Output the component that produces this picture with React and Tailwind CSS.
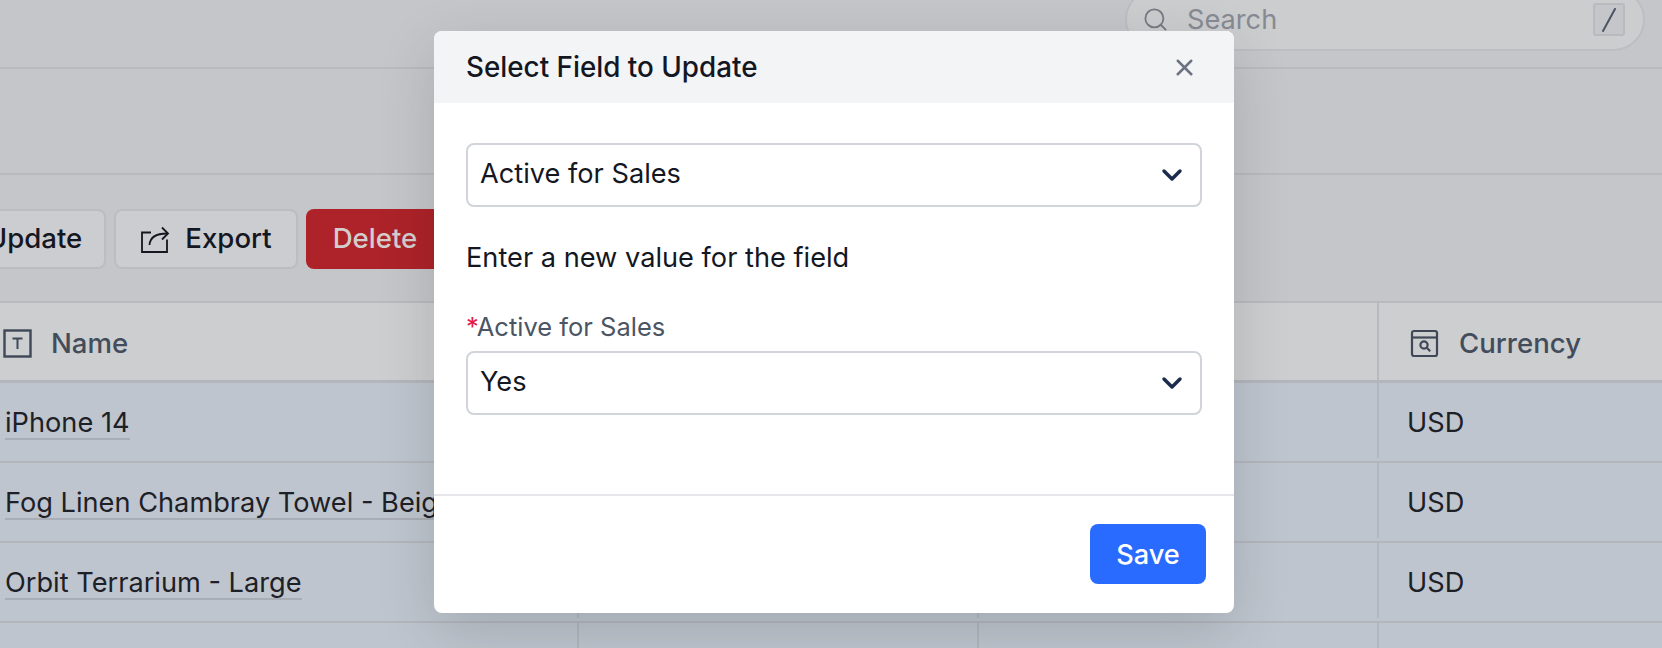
import { ChevronDown, Search, X } from "lucide-react";

const rows = ["iPhone 14", "Fog Linen Chambray Towel - Beige", "Orbit Terrarium - Large"];

const IconText = () => (
  <svg viewBox="0 0 29 29" className="w-[29px] h-[29px] text-[#3f4856]" fill="none" stroke="currentColor">
    <rect x="1.500" y="1.500" width="26" height="26" strokeWidth="2.400" />
    <path d="M9.500 9.500h10M14.500 9.500v10.500" strokeWidth="2" />
  </svg>
);

const IconLookup = () => (
  <svg viewBox="0 0 29 29" className="w-[29px] h-[29px] text-[#3f4856]" fill="none" stroke="currentColor" strokeWidth="2.200">
    <rect x="2" y="2" width="25" height="25" rx="2" />
    <path d="M2 8.500h25" />
    <circle cx="14" cy="16" r="3.600" />
    <path d="M16.800 18.800l3.400 3.400" />
  </svg>
);

const IconExport = () => (
  <svg viewBox="0 0 30 30" className="w-[30px] h-[30px] text-[#14171f]" fill="none" stroke="currentColor" strokeWidth="1.800">
    <path d="M11 8.500H2v19.500h25V15.500" />
    <path d="M9.500 21c.5-7.500 6-11.500 17.500-11.500" />
    <path d="M22 3.500l6 6-6 6" />
  </svg>
);

function FieldSelect({ value }) {
  return (
    <div className="h-[64px] rounded-[8px] border-2 border-[#d1d5db] bg-white flex items-center justify-between pl-[12px] pr-[12px]">
      <span className="text-[27.200px] leading-[38px] -mt-[2px] text-[#14171f]">{value}</span>
      <ChevronDown className="w-[32px] h-[32px] text-[#1a2b4b]" strokeWidth={2.600} />
    </div>
  );
}

export default function App() {
  return (
    <div
      className="relative h-[648px] overflow-hidden bg-[#c5c6ca] text-[27.200px] leading-[38px] text-[#1d2026]"
      style={{ fontFamily: "Inter, 'Liberation Sans', sans-serif" }}
    >
      {/* Top bar, scrolled so the search pill is cut off */}
      <div className="h-[69px] border-b-2 border-[#b9babe] flex justify-end pr-[17px]">
        <div className="-mt-[12px] h-[63px] w-[520px] rounded-full border-2 border-[#bdbec3] bg-[#cccdcf] flex items-center pl-[15px] pr-[18px]">
          <Search className="w-[27px] h-[27px] text-[#777a82]" strokeWidth={1.600} />
          <span className="ml-[18px] text-[#878a92]">Search</span>
          <span className="ml-auto w-[32px] h-[33px] rounded-[3px] border-2 border-[#b9babe] bg-[#c5c6ca] flex items-center justify-center">
            <svg viewBox="0 0 14 24" className="w-[14px] h-[24px] text-[#4b5563]" fill="none" stroke="currentColor" strokeWidth="2" strokeLinecap="round">
              <path d="M13 1L1 23" />
            </svg>
          </span>
        </div>
      </div>

      <div className="h-[106px] border-b-2 border-[#b9babe]" />

      {/* Toolbar */}
      <div className="h-[126px] flex items-start pt-[34px] gap-[8px] -ml-[23px] text-[27.600px]">
        <button className="h-[60px] w-[129px] rounded-[8px] border-2 border-[#bcbdc2] bg-[#cccdd0] font-medium text-[#14171f] pr-[14px] pb-[2px]">
          Update
        </button>
        <button className="h-[60px] w-[184px] rounded-[8px] border-2 border-[#bcbdc2] bg-[#cccdd0] font-medium text-[#14171f] flex items-center justify-center gap-[15px]">
          <IconExport />
          <span className="-mt-[2px]">Export</span>
        </button>
        <button className="h-[60px] w-[150px] rounded-[8px] bg-[#ad2329] font-medium text-[#d4cdce] pr-[12px] pb-[2px]">
          Delete
        </button>
      </div>

      {/* Table */}
      <div className="border-t-2 border-[#b9babe]">
        <div className="grid grid-cols-[577px_400px_400px_1fr] h-[80px] bg-[#cdced0] border-b-[3px] border-[#b4b6bd] text-[#434c5a] text-[27.600px] font-medium">
          <div className="flex items-center gap-[19px] pl-[3px] pt-[3px]">
            <IconText />
            Name
          </div>
          <div />
          <div />
          <div className="border-l-2 border-[#b9babe] flex items-center gap-[20px] pl-[31px] pt-[3px]">
            <IconLookup />
            Currency
          </div>
        </div>
        {rows.map((name) => (
          <div key={name} className="grid grid-cols-[577px_400px_400px_1fr] h-[80px] bg-[#bec5ce] border-b-2 border-[#b3b6bd]">
            <div className="flex items-center pl-[5px] pt-[3px]">
              <span className="border-b-2 border-[#a9adb5] leading-[31px] whitespace-nowrap">{name}</span>
            </div>
            <div className="border-l-2 border-[#b3b6bd] mb-[3px]" />
            <div className="border-l-2 border-[#b3b6bd] mb-[3px]" />
            <div className="border-l-2 border-[#b3b6bd] mb-[3px] flex items-center pl-[28px] pt-[5px]">USD</div>
          </div>
        ))}
        <div className="grid grid-cols-[577px_400px_400px_1fr] h-[80px] bg-[#bec5ce]">
          <div />
          <div className="border-l-2 border-[#b3b6bd]" />
          <div className="border-l-2 border-[#b3b6bd]" />
          <div className="border-l-2 border-[#b3b6bd]" />
        </div>
      </div>

      {/* Modal */}
      <div className="absolute left-[434px] top-[31px] w-[800px] h-[582px] rounded-[8px] bg-white overflow-hidden flex flex-col shadow-[0_18px_60px_rgba(0,0,0,0.14)]">
        <div className="h-[72px] shrink-0 bg-[#f3f4f6] flex items-center justify-between pl-[32px] pr-[36px]">
          <h2 className="text-[27.800px] font-medium text-[#14171f]">Select Field to Update</h2>
          <X className="w-[27px] h-[27px] text-[#6b7280]" strokeWidth={2.200} />
        </div>
        <div className="flex-1 px-[32px] pt-[40px]">
          <FieldSelect value="Active for Sales" />
          <p className="mt-[32px] text-[#14171f]">Enter a new value for the field</p>
          <label className="block mt-[34px] mb-[9px] text-[25.500px] text-[#4b5563] leading-[31px]">
            <span className="text-[#e11d48]">*</span>Active for Sales
          </label>
          <FieldSelect value="Yes" />
        </div>
        <div className="h-[119px] shrink-0 border-t-2 border-[#e5e7eb] flex justify-end items-start pt-[28px] pr-[28px]">
          <button className="w-[116px] h-[60px] rounded-[8px] bg-[#2a6bff] text-white font-medium pt-[2px]">Save</button>
        </div>
      </div>
    </div>
  );
}
